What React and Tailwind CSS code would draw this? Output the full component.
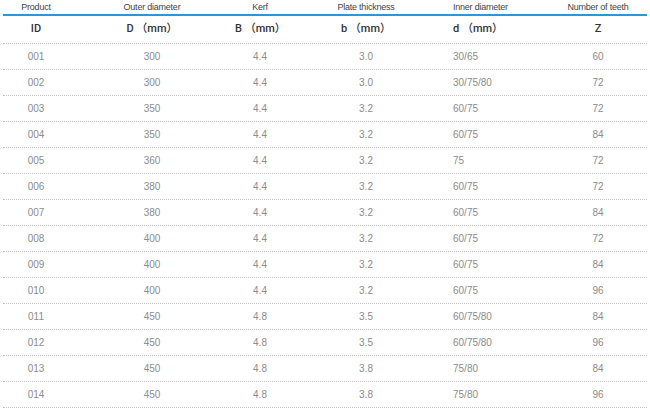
import React from 'react';

const headers = ['Product', 'Outer diameter', 'Kerf', 'Plate thickness', 'Inner diameter', 'Number of teeth'];
const units = ['ID', 'D （mm）', 'B （mm）', 'b （mm）', 'd （mm）', 'Z'];

const rows = [
  ['001', '300', '4.4', '3.0', '30/65', '60'],
  ['002', '300', '4.4', '3.0', '30/75/80', '72'],
  ['003', '350', '4.4', '3.2', '60/75', '72'],
  ['004', '350', '4.4', '3.2', '60/75', '84'],
  ['005', '360', '4.4', '3.2', '75', '72'],
  ['006', '380', '4.4', '3.2', '60/75', '72'],
  ['007', '380', '4.4', '3.2', '60/75', '84'],
  ['008', '400', '4.4', '3.2', '60/75', '72'],
  ['009', '400', '4.4', '3.2', '60/75', '84'],
  ['010', '400', '4.4', '3.2', '60/75', '96'],
  ['011', '450', '4.8', '3.5', '60/75/80', '84'],
  ['012', '450', '4.8', '3.5', '60/75/80', '96'],
  ['013', '450', '4.8', '3.8', '75/80', '84'],
  ['014', '450', '4.8', '3.8', '75/80', '96'],
];

const grid = 'grid grid-cols-[66px_166px_50px_162px_106px_90px]';
// inner diameter column is left aligned in the original
const align = (i) => (i === 4 ? 'text-left pl-[6px]' : 'text-center');

const App = () => {
  return (
    <div className="w-[650px] h-[419px] bg-white px-[3px] font-['Liberation_Sans','Noto_Sans_CJK_SC',sans-serif]">
      <div className={`${grid} h-[16px] border-b-2 border-[#2b98d6]`}>
        {headers.map((h, i) => (
          <div key={i} className={`${i === 4 ? 'text-left pl-[6px]' : 'text-center'} text-[9px] leading-[14px] tracking-tight text-[#444] whitespace-nowrap`}>
            {h}
          </div>
        ))}
      </div>

      <div className={`${grid} h-[28px] border-b border-dotted border-[#c4c4c4] items-center`}>
        {units.map((u, i) => (
          <div key={i} className={`${align(i)} text-[11px] font-medium text-[#333] whitespace-nowrap font-['Roboto','Noto_Sans_CJK_SC',sans-serif]`}>
            {u}
          </div>
        ))}
      </div>

      {rows.map((row, r) => (
        <div key={r} className={`${grid} h-[26px] border-b border-dotted border-[#c4c4c4] items-center`}>
          {row.map((v, i) => (
            <div key={i} className={`${align(i)} text-[10px] text-[#8c8c8c]`}>
              {v}
            </div>
          ))}
        </div>
      ))}
    </div>
  );
};

export default App;
